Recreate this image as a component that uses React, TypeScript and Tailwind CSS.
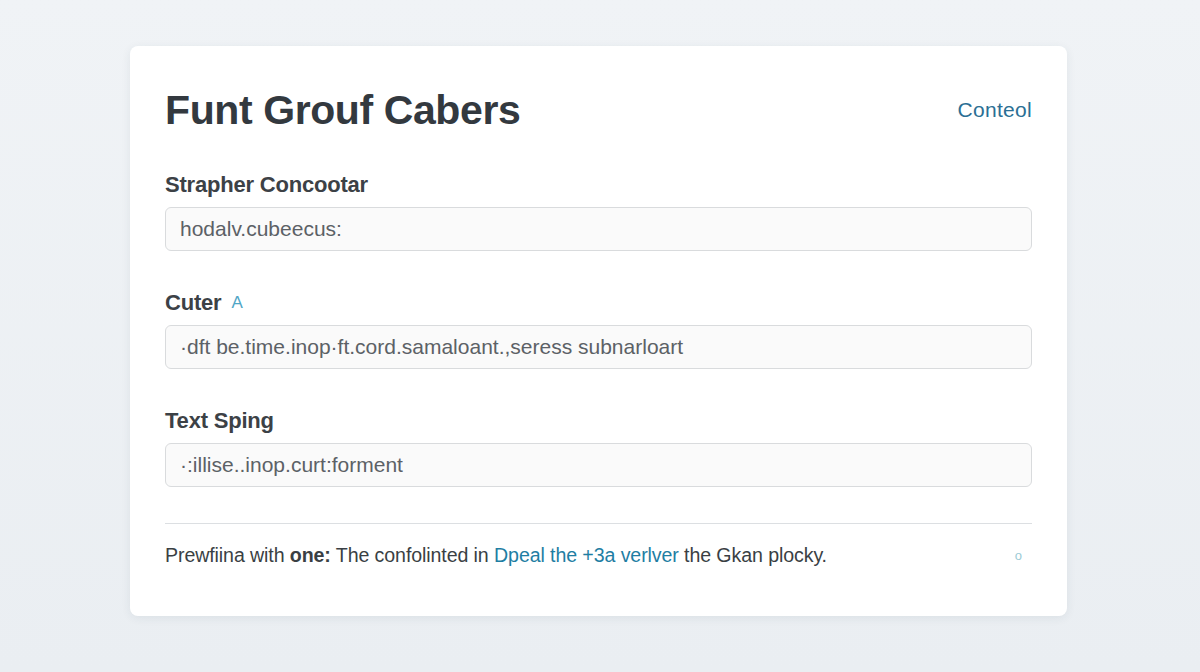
import React from "react";

const fields = [
  { label: "Strapher Concootar", value: "hodalv.cubeecus:", mark: false },
  { label: "Cuter", value: "\u00b7dft be.time.inop\u00b7ft.cord.samaloant.,seress subnarloart", mark: true },
  { label: "Text Sping", value: "\u00b7:illise..inop.curt:forment", mark: false },
];

export default function App() {
  return (
    <div
      className="min-h-[672px] w-full bg-gradient-to-b from-[#f0f3f6] to-[#eaeef2] pt-[46px]"
      style={{ fontFamily: '"Liberation Sans", Arial, sans-serif' }}
    >
      <div className="ml-[130px] w-[937px] rounded-lg bg-white px-[35px] pb-[46px] pt-[42px] shadow-[0_2px_10px_rgba(40,60,80,0.08)]">
        {/* header */}
        <div className="flex items-center justify-between">
          <h1 className="text-[41px] font-bold leading-[44px] tracking-[-0.4px] text-[#33393f]">
            Funt Grouf Cabers
          </h1>
          <a className="text-[21px] tracking-[0.3px] text-[#2b6f94]">Conteol</a>
        </div>

        {/* fields */}
        <div className="mt-[40px] flex flex-col gap-[39px]">
          {fields.map((f) => (
            <div key={f.label}>
              <div className="flex items-center gap-[10px]">
                <span className="text-[22px] font-bold leading-[26px] tracking-[-0.2px] text-[#3c4146]">
                  {f.label}
                </span>
                {f.mark && <span className="text-[17px] text-[#4fa6c6]">A</span>}
              </div>
              <div className="mt-[9px] flex h-[44px] items-center rounded-md border border-[#d9dbdd] bg-[#fafafa] px-[14px]">
                <span className="text-[21px] text-[#5c6166]">{f.value}</span>
              </div>
            </div>
          ))}
        </div>

        {/* footer */}
        <div className="mt-[36px] border-t border-[#dcdfe2] pt-[17px]">
          <div className="flex items-center justify-between">
            <p className="text-[19.6px] tracking-[-0.1px] text-[#3a3f44]">
              Prewfiina with <span className="font-bold">one:</span> The confolinted in{" "}
              <a className="text-[#1f7ea3]">Dpeal the +3a verlver</a> the Gkan plocky.
            </p>
            <span className="mr-[10px] text-[13px] text-[#9ccbd6]">o</span>
          </div>
        </div>
      </div>
    </div>
  );
}
